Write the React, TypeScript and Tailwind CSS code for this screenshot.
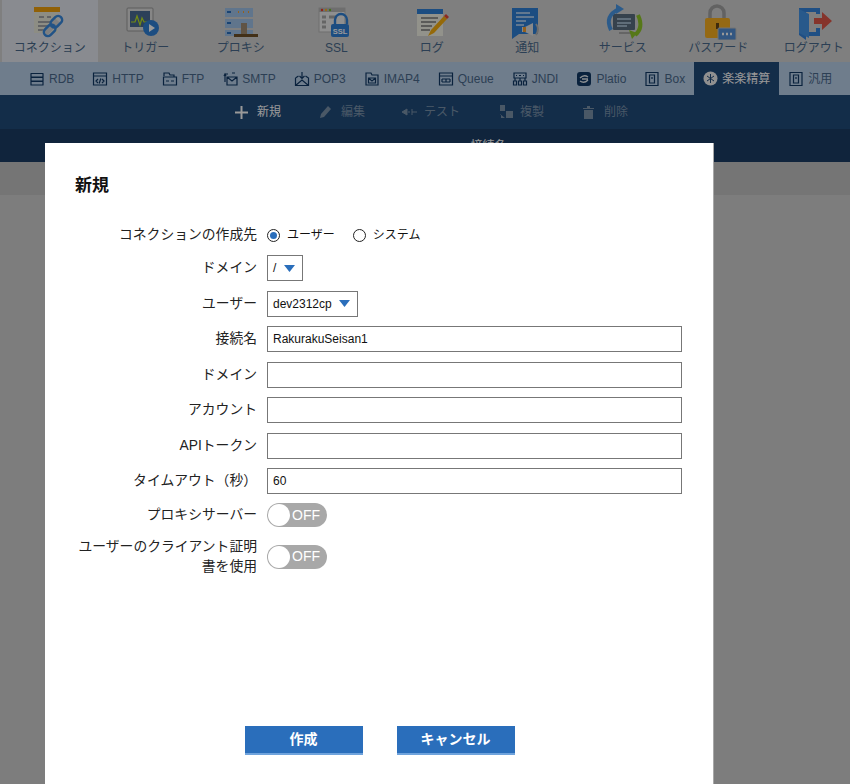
import type { ReactNode } from "react";

const font = "font-['Liberation_Sans','Noto_Sans_CJK_JP',sans-serif]";

// top nav icons, drawn in a 48x36 box
const navIcons: Record<string, ReactNode> = {
  connection: (
    <>
      <rect x="8" y="6" width="24" height="25" fill="#ececdc" />
      <rect x="8" y="5" width="26" height="5" fill="#f2a20c" />
      <path d="M13 15h5M21 15h4M12 20h13M12 24h10M12 28h8" stroke="#8a8f98" strokeWidth="1.5" />
      <path d="M19 31l12-13" stroke="#d4d4d4" strokeWidth="7" />
      <rect x="24" y="16" width="13" height="8" rx="4" transform="rotate(-45 30 20)" fill="none" stroke="#3a8ae0" strokeWidth="2.5" />
      <rect x="17" y="24" width="13" height="8" rx="4" transform="rotate(-45 24 28)" fill="none" stroke="#3a8ae0" strokeWidth="2.5" />
    </>
  ),
  trigger: (
    <>
      <rect x="6" y="6" width="26" height="23" rx="1" fill="#e0e0e0" stroke="#9a9a9a" />
      <rect x="9" y="9" width="20" height="16" fill="#4a6c94" />
      <path d="M10 20h4l2-6 3 9 2-7 2 4h5" fill="none" stroke="#c0e820" strokeWidth="1.2" />
      <circle cx="30" cy="26" r="8" fill="#3080d8" />
      <path d="M28 22l6 4-6 4z" fill="#fff" />
    </>
  ),
  proxy: (
    <>
      <rect x="8" y="6" width="28" height="9" fill="#a0c4ea" />
      <rect x="8" y="17" width="28" height="9" fill="#a0c4ea" />
      <rect x="8" y="28" width="28" height="6" fill="#a0c4ea" />
      <path d="M10 10h4M10 21h4M10 31h4" stroke="#2a70c0" strokeWidth="2" />
      <path d="M21 10h1M26 10h1M31 10h1" stroke="#f8a030" strokeWidth="2" />
      <rect x="24" y="21" width="6" height="13" fill="#a08c74" />
      <rect x="17" y="32" width="24" height="3" fill="#6e5028" />
    </>
  ),
  ssl: (
    <>
      <rect x="7" y="6" width="26" height="24" fill="#eeeeee" stroke="#b8b8b8" />
      <rect x="7" y="6" width="26" height="4" fill="#b8b8b8" />
      <circle cx="10" cy="8" r="1.2" fill="#f03828" />
      <circle cx="14" cy="8" r="1.2" fill="#f8b028" />
      <circle cx="18" cy="8" r="1.2" fill="#70c028" />
      <path d="M10 15h4M10 20h4M10 25h4M17 15h8" stroke="#a8a8a8" strokeWidth="3" />
      <path d="M23 22v-4a6 6 0 0 1 12 0v4" fill="none" stroke="#3080d8" strokeWidth="2.4" />
      <rect x="19" y="22" width="18" height="13" rx="2" fill="#3080d8" />
      <text x="28" y="31.500" textAnchor="middle" fontSize="7.500" fontWeight="700" fill="#fff">
        SSL
      </text>
    </>
  ),
  log: (
    <>
      <rect x="9" y="7" width="26" height="27" fill="#f4f4e8" />
      <rect x="9" y="7" width="26" height="5" fill="#3080d8" />
      <path d="M13 16h17M13 20h15M13 24h11M13 28h9" stroke="#7a7a7a" strokeWidth="1.3" />
      <path d="M20 34l3-6 13-14 3 3-13 14z" fill="#f8b010" />
      <path d="M36 14l2-2 3 3-2 2z" fill="#e84838" />
    </>
  ),
  notice: (
    <>
      <path d="M9 6h26v26H16l-7 5z" fill="#3080d8" />
      <path d="M13 11h14M13 15h18M13 19h10M13 23h8" stroke="#c8e0f8" strokeWidth="1.4" />
      <path d="M22 25l8-4v13l-8-4h-3v-5z" fill="#e4e4e4" />
      <rect x="20" y="25" width="3" height="5" fill="#f8a030" />
      <path d="M33 22q4 5 0 11" fill="none" stroke="#b4b4b4" strokeWidth="2" />
    </>
  ),
  service: (
    <>
      <rect x="14" y="12" width="22" height="16" rx="1" fill="#5a6e80" />
      <path d="M18 17h14M18 21h14M18 24h10" stroke="#b8d0e4" strokeWidth="1.3" />
      <path d="M20 31h12" stroke="#a8a8a8" strokeWidth="2" />
      <path d="M12 28Q5 14 20 7" fill="none" stroke="#4898e8" strokeWidth="4" />
      <path d="M17 2l8 5-8 5z" fill="#4898e8" />
      <path d="M36 33q9-7 3-20" fill="none" stroke="#90c828" strokeWidth="4" />
      <path d="M30 28l8 3-5 6z" fill="#90c828" />
    </>
  ),
  password: (
    <>
      <path d="M16 17v-6a7 7 0 0 1 14 0v6" fill="none" stroke="#a4a4a4" strokeWidth="3.500" />
      <rect x="11" y="16" width="25" height="20" rx="2" fill="#f8b020" />
      <rect x="22" y="21" width="3" height="6" fill="#6a4814" />
      <rect x="24" y="26" width="18" height="12" rx="1" fill="#5490d8" stroke="#c0c0c0" />
      <path d="M28 32h2M32 32h2M36 32h2" stroke="#fff" strokeWidth="2.400" />
    </>
  ),
  logout: (
    <>
      <path d="M9 6h21v6h-4V10H16v20h10v-4h4v8H16v4l-7-5z" fill="#3484dc" />
      <path d="M9 7l10 5v24l-10-5z" fill="#4494e8" />
      <path d="M24 16h8v-6l10 9-10 9v-6h-8z" fill="#e05848" />
    </>
  ),
};

const navItems = [
  ["connection", "コネクション"],
  ["trigger", "トリガー"],
  ["proxy", "プロキシ"],
  ["ssl", "SSL"],
  ["log", "ログ"],
  ["notice", "通知"],
  ["service", "サービス"],
  ["password", "パスワード"],
  ["logout", "ログアウト"],
];

// sub nav icons, 16x16 outlines
const tabIcons: Record<string, ReactNode> = {
  rdb: <path d="M2 2.500h12v3.500H2zM2 6.500h12V10H2zM2 10.500h12V14H2z" strokeLinejoin="round" />,
  http: <path d="M1.500 2h13v12h-13zM1.500 5h13M6 8l-2 2 2 2M10 8l2 2-2 2M8.800 7.500l-1.600 5" />,
  ftp: <path d="M2 5V2h5l1 2h4v2M1.500 6h13v8h-13zM4 10h3M9 10h3" />,
  smtp: <path d="M3 11V3h3M2 5l1-2 1 2M5 6h10v8H5zM5 6l5 4 5-4M13 2h-3" />,
  pop3: <path d="M1.500 7v7.500h13V7l-3-2M1.500 7l3-2M1.500 14.500L8 9l6.500 5.500M8 1v6M5.500 5L8 7.500 10.500 5" />,
  imap4: <path d="M2 5V2h5l1 2h6v10H2zM4.500 7h7v5h-7zM4.500 7L8 10l3.500-3" />,
  queue: <path d="M1.500 2h13v12h-13zM1.500 5h13M4 8h8M4 11h8M4 8v3M8 8v3M12 8v3" />,
  jndi: <path d="M2 2h12v5H2zM4 4.500h1M7 4.500h2M11 4.500h1M1.500 10h3v4h-3zM6.500 10h3v4h-3zM11.500 10h3v4h-3zM3 7v3M8 7v3M13 7v3" />,
  box: <path d="M2 1.500h12v13H2zM5.500 4h5v8h-5zM8 6v2" />,
};

const tabs = [
  ["rdb", "RDB"],
  ["http", "HTTP"],
  ["ftp", "FTP"],
  ["smtp", "SMTP"],
  ["pop3", "POP3"],
  ["imap4", "IMAP4"],
  ["queue", "Queue"],
  ["jndi", "JNDI"],
  ["platio", "Platio"],
  ["box", "Box"],
  ["rakuraku", "楽楽精算"],
  ["generic", "汎用"],
];

function TabIcon({ name }: { name: string }) {
  if (name === "rakuraku") {
    return (
      <svg width="15" height="15" viewBox="0 0 15 15" className="shrink-0">
        <circle cx="7.500" cy="7.500" r="7" fill="#f0f0f0" />
        <path d="M7.500 3v9M4 5l7 5M11 5l-7 5" stroke="#204b7b" strokeWidth="1" />
      </svg>
    );
  }
  if (name === "platio") {
    return (
      <svg width="16" height="16" viewBox="0 0 16 16" className="shrink-0">
        <rect x="1" y="1" width="14" height="14" rx="3" fill="#123a66" />
        <path d="M4 7q4-4 8-1M12 9q-4 4-8 1M6 8h6" fill="none" stroke="#e8eef4" strokeWidth="1.300" />
      </svg>
    );
  }
  return (
    <svg width="16" height="16" viewBox="0 0 16 16" fill="none" stroke="#123a66" strokeWidth="1.200" className="shrink-0">
      {tabIcons[name === "generic" ? "box" : name]}
    </svg>
  );
}

function Row({ label, mt = "mt-[9.5px]", children }: { label: ReactNode; mt?: string; children: ReactNode }) {
  return (
    <div className={`flex min-h-[26px] items-center gap-[10px] ${mt}`}>
      <div className="w-[186px] shrink-0 text-right text-[13.8px] leading-[20px] text-[#222]">{label}</div>
      {children}
    </div>
  );
}

function TextRow({ label, value }: { label: string; value: string }) {
  return (
    <Row label={label}>
      <div className="flex h-[26px] w-[415px] items-center border border-[#777] pl-[5px] text-[12px] text-[#111]">
        {value}
      </div>
    </Row>
  );
}

function Select({ value, width }: { value: string; width: string }) {
  return (
    <div className={`flex h-[26px] items-center justify-between border border-[#777] pl-[5px] pr-[7px] text-[12px] text-[#111] ${width}`}>
      <span>{value}</span>
      <svg width="11" height="7" viewBox="0 0 11 7">
        <path d="M0 0h11L5.500 7z" fill="#2a6ebb" />
      </svg>
    </div>
  );
}

function Radio({ checked, label }: { checked?: boolean; label: string }) {
  return (
    <div className="flex items-center gap-[7px] text-[12px] text-[#111]">
      <span className="flex h-[13px] w-[13px] items-center justify-center rounded-full border-[1.5px] border-[#222]">
        {checked ? <span className="h-[7px] w-[7px] rounded-full bg-[#2a6ebb]" /> : null}
      </span>
      {label}
    </div>
  );
}

function Toggle() {
  return (
    <div className="flex h-[24px] w-[60px] items-center rounded-full bg-[#a8a8a8] pl-[1px]">
      <span className="h-[22px] w-[22px] rounded-full bg-white" />
      <span className="ml-[2px] text-[14px] text-white">OFF</span>
    </div>
  );
}

export default function App() {
  return (
    <div className={`relative h-[784px] w-[850px] overflow-hidden bg-[#d0d0d0] ${font}`}>
      <nav className="flex h-[62px] bg-[#d4d4d4] pl-[2px]">
        {navItems.map(([key, label], i) => (
          <div
            key={key}
            className={`flex w-[95.5px] shrink-0 flex-col items-center pt-[2px] ${i === 0 ? "bg-[#e4e8f0]" : ""}`}
          >
            <svg width="48" height="38" viewBox="0 0 48 38">
              {navIcons[key]}
            </svg>
            <span className="text-[12px] leading-[16px] text-[#4a6a8c]">{label}</span>
          </div>
        ))}
      </nav>

      <div className="flex h-[33px] bg-[#b9d0ea] pl-[20px]">
        {tabs.map(([key, label]) => (
          <div
            key={key}
            className={`flex items-center gap-[4px] px-[9px] text-[12px] whitespace-nowrap ${
              key === "rakuraku" ? "bg-[#204b7b] text-white" : "text-[#4a6a8c]"
            }`}
          >
            <TabIcon name={key} />
            {label}
          </div>
        ))}
      </div>

      <div className="flex h-[34px] items-center bg-[#204b7b] pl-[235px] text-[12px]">
        <div className="flex items-center gap-[9px] text-white">
          <svg width="13" height="13" viewBox="0 0 13 13">
            <path d="M6.500 0v13M0 6.500h13" stroke="#fff" strokeWidth="2" />
          </svg>
          新規
        </div>
        <div className="ml-[39px] flex items-center gap-[9px] text-[#7c93ab]">
          <svg width="12" height="12" viewBox="0 0 12 12">
            <path d="M0 12l1-4 7-8 3 3-7 8z" fill="#7c93ab" />
          </svg>
          編集
        </div>
        <div className="ml-[37px] flex items-center gap-[6px] text-[#7c93ab]">
          <svg width="16" height="8" viewBox="0 0 16 8">
            <path d="M0 4l5-3v6zM6 4h2M10 1v6M10 4h5" stroke="#7c93ab" fill="#7c93ab" />
          </svg>
          テスト
        </div>
        <div className="ml-[40px] flex items-center gap-[7px] text-[#7c93ab]">
          <svg width="13" height="14" viewBox="0 0 13 14">
            <path d="M0 0h5v6H0zM6 6h7v7H6zM0 9h1v4h4" fill="#7c93ab" />
          </svg>
          複製
        </div>
        <div className="ml-[39px] flex items-center gap-[10px] text-[#7c93ab]">
          <svg width="11" height="13" viewBox="0 0 11 13">
            <path d="M0 2h11v1H0zM4 0h3v2H4zM1 4h9v9H1z" fill="#7c93ab" />
          </svg>
          削除
        </div>
      </div>

      <div className="flex h-[33px] items-center justify-center bg-[#1b3c65] pl-[127px] text-[12px] text-white">
        接続名
      </div>
      <div className="h-[33px] bg-[#c4c4c4]" />

      <div className="absolute inset-0 bg-black/40 pl-[45px] pt-[143px]">
        <div className="h-[700px] w-[669px] border-r border-[#a8a8a8] bg-white">
          <h2 className="pl-[30px] pt-[33px] text-[17px] leading-[20px] font-bold text-[#111]">新規</h2>
          <div className="mt-[26px] pl-[26px]">
            <Row label="コネクションの作成先" mt="mt-0">
              <div className="flex items-center gap-[18px]">
                <Radio checked label="ユーザー" />
                <Radio label="システム" />
              </div>
            </Row>
            <Row label="ドメイン" mt="mt-[7px]">
              <Select value="/" width="w-[36px]" />
            </Row>
            <Row label="ユーザー">
              <Select value="dev2312cp" width="w-[91px]" />
            </Row>
            <TextRow label="接続名" value="RakurakuSeisan1" />
            <TextRow label="ドメイン" value="" />
            <TextRow label="アカウント" value="" />
            <TextRow label="APIトークン" value="" />
            <TextRow label="タイムアウト（秒）" value="60" />
            <Row label="プロキシサーバー" mt="mt-[8px]">
              <Toggle />
            </Row>
            <Row label="ユーザーのクライアント証明書を使用" mt="mt-[8.5px]">
              <Toggle />
            </Row>
          </div>
          <div className="mt-[149px] flex justify-center gap-[34px] pl-[1px]">
            <button className="h-[29px] w-[118px] border-b-2 border-[#6fa3dc] bg-[#2a6ebb] text-[14px] font-bold text-white">
              作成
            </button>
            <button className="h-[29px] w-[118px] border-b-2 border-[#6fa3dc] bg-[#2a6ebb] text-[14px] font-bold text-white">
              キャンセル
            </button>
          </div>
        </div>
      </div>
    </div>
  );
}
